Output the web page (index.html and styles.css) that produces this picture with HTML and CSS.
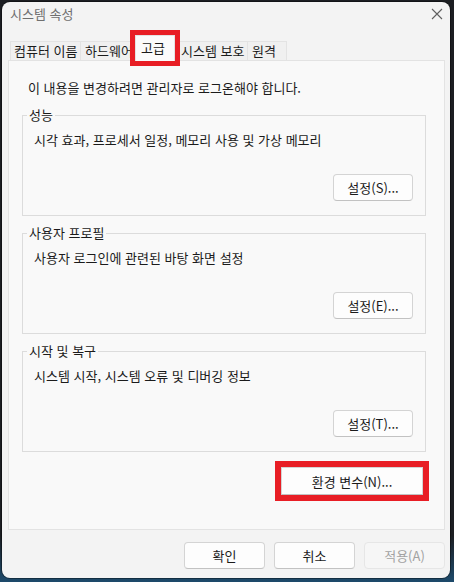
FILE: index.html
```html
<!DOCTYPE html>
<html lang="ko">
<head>
    <meta charset="UTF-8">
    <meta name="viewport" content="width=device-width, initial-scale=1.0">
    <title>시스템 속성</title>
    <link rel="stylesheet" href="styles.css">
</head>
<body>
    <div class="window">
        <div class="titlebar">
            <span class="title">시스템 속성</span>
            <svg class="close" width="12" height="12" viewBox="0 0 12 12">
                <path d="M1 1 L11 11 M11 1 L1 11" stroke="#5f5f5f" stroke-width="1.1" fill="none"/>
            </svg>
        </div>

        <div class="tabs">
            <div class="tab tab-name">컴퓨터 이름</div>
            <div class="tab tab-hw">하드웨어</div>
            <div class="tab active">고급</div>
            <div class="tab tab-protect">시스템 보호</div>
            <div class="tab tab-remote">원격</div>
        </div>

        <div class="panel">
            <p class="note">이 내용을 변경하려면 관리자로 로그온해야 합니다.</p>

            <fieldset class="group">
                <legend>성능</legend>
                <div class="group-body">
                    <p>시각 효과, 프로세서 일정, 메모리 사용 및 가상 메모리</p>
                    <button class="btn">설정(S)...</button>
                </div>
            </fieldset>

            <fieldset class="group">
                <legend>사용자 프로필</legend>
                <div class="group-body">
                    <p>사용자 로그인에 관련된 바탕 화면 설정</p>
                    <button class="btn">설정(E)...</button>
                </div>
            </fieldset>

            <fieldset class="group">
                <legend>시작 및 복구</legend>
                <div class="group-body">
                    <p>시스템 시작, 시스템 오류 및 디버깅 정보</p>
                    <button class="btn">설정(T)...</button>
                </div>
            </fieldset>

            <div class="env-row">
                <button class="btn env">환경 변수(N)...</button>
            </div>
        </div>

        <div class="footer">
            <button class="btn">확인</button>
            <button class="btn">취소</button>
            <button class="btn disabled">적용(A)</button>
        </div>
    </div>
</body>
</html>
```

FILE: styles.css
```css
html, body {
    margin: 0;
    height: 100%;
}
body {
    background: linear-gradient(to bottom, #1c1e22 0%, #1c1e22 92%, #1d4a6b 100%);
    font-family: "Noto Sans CJK KR", "Noto Sans", sans-serif;
    font-size: 13px;
    line-height: 16px;
    color: #1b1b1b;
    padding: 2px 4px 0 2px;
    box-sizing: border-box;
}
.window {
    width: 448px;
    height: 576px;
    background: #f3f3f3;
    border-radius: 8px;
    display: flex;
    flex-direction: column;
    box-sizing: border-box;
    box-shadow: 0 0 0 1px rgba(0, 0, 0, 0.35);
}
.titlebar {
    height: 24px;
    display: flex;
    align-items: center;
    justify-content: space-between;
    padding: 0 7px 0 8px;
}
.title {
    color: #6f6f6f;
}
.close {
    display: block;
}
.tabs {
    display: flex;
    align-items: flex-end;
    padding-left: 8px;
    margin-top: 9px;
    position: relative;
    z-index: 1;
}
.tab {
    height: 19px;
    padding: 0 0 0 4px;
    border: 1px solid #e3e3e3;
    border-bottom: none;
    background: #f0f0f0;
    box-sizing: border-box;
    line-height: 18px;
    white-space: nowrap;
    overflow: hidden;
}
.tab + .tab {
    border-left: none;
}
.tab-name {
    width: 71px;
    padding-left: 3px;
}
.tab-hw {
    width: 56px;
}
.tab-protect {
    width: 75px;
    padding-left: 8px;
}
.tab-remote {
    width: 39px;
}
.tab.active {
    width: 40px;
    height: 26px;
    padding: 3px 0 0 5px;
    margin: 0 -2px -1px;
    background: #fbfbfb;
    border-left: 1px solid #e3e3e3;
    position: relative;
    z-index: 1;
    overflow: visible;
    outline: 5px solid #e81e25;
}
.panel {
    margin: 0 5px 0 6px;
    background: #f9f9f9;
    border: 1px solid #e3e3e3;
    padding: 19px 18px 34px 13px;
}
.note {
    margin: 0 0 11px 6px;
}
.group {
    margin: 0 0 9px 0;
    border: 1px solid #dcdcdc;
    padding: 9px 12px 14px 4px;
    min-width: 0;
}
.group legend {
    padding: 0 2px;
}
.group-body {
    display: flex;
    flex-direction: column;
    align-items: flex-end;
    padding-left: 7px;
}
.group-body p {
    margin: 0 0 26px 0;
    align-self: flex-start;
}
.btn {
    width: 80px;
    height: 27px;
    font-family: inherit;
    font-size: 13px;
    color: #1b1b1b;
    background: #fdfdfd;
    border: 1px solid #d4d4d4;
    border-bottom-color: #c2c2c2;
    border-radius: 4px;
    padding: 0;
}
.env-row {
    display: flex;
    justify-content: flex-end;
    margin-top: 15px;
    padding-right: 3px;
}
.btn.env {
    width: 142px;
    height: 28px;
    border-radius: 0;
    outline: 6px solid #e81e25;
}
.footer {
    display: flex;
    justify-content: flex-end;
    gap: 9px;
    padding: 12px 5px 0 0;
}
.footer .btn {
    width: 81px;
}
.btn.disabled {
    color: #a2a2a2;
    background: #f6f6f6;
    border-color: #e6e6e6;
}
```
